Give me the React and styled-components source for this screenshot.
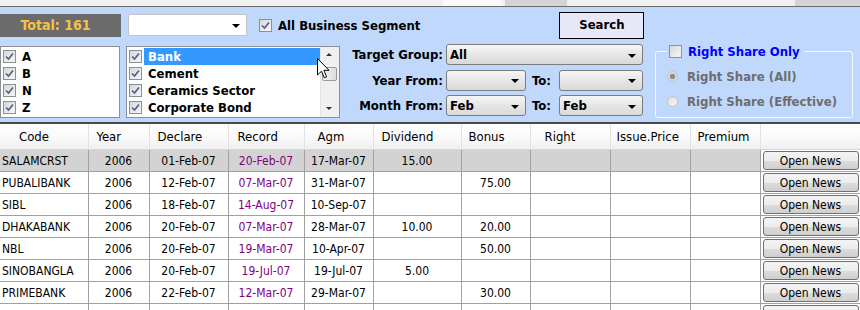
import React from 'react';
import styled, { createGlobalStyle } from 'styled-components';

const GlobalStyle = createGlobalStyle`
  html, body {
    margin: 0;
    padding: 0;
    background: #ffffff;
    overflow: hidden;
  }
  body {
    font-family: "DejaVu Sans", "Liberation Sans", sans-serif;
    font-stretch: condensed;
  }
`;

const columns = [
  { key: 'code', label: 'Code', w: 88, pad: 19, align: 'left' },
  { key: 'year', label: 'Year', w: 61, pad: 8 },
  { key: 'declare', label: 'Declare', w: 79, pad: 8 },
  { key: 'record', label: 'Record', w: 76, pad: 9, purple: true },
  { key: 'agm', label: 'Agm', w: 69, pad: 13 },
  { key: 'dividend', label: 'Dividend', w: 88, pad: 8 },
  { key: 'bonus', label: 'Bonus', w: 69, pad: 7 },
  { key: 'right', label: 'Right', w: 80, pad: 14 },
  { key: 'issue', label: 'Issue.Price', w: 80, pad: 6 },
  { key: 'premium', label: 'Premium', w: 70, pad: 7 },
  { key: 'news', label: '', w: 100, pad: 0 },
];

const rows = [
  { code: 'SALAMCRST', year: '2006', declare: '01-Feb-07', record: '20-Feb-07', agm: '17-Mar-07', dividend: '15.00', bonus: '' },
  { code: 'PUBALIBANK', year: '2006', declare: '12-Feb-07', record: '07-Mar-07', agm: '31-Mar-07', dividend: '', bonus: '75.00' },
  { code: 'SIBL', year: '2006', declare: '18-Feb-07', record: '14-Aug-07', agm: '10-Sep-07', dividend: '', bonus: '' },
  { code: 'DHAKABANK', year: '2006', declare: '20-Feb-07', record: '07-Mar-07', agm: '28-Mar-07', dividend: '10.00', bonus: '20.00' },
  { code: 'NBL', year: '2006', declare: '20-Feb-07', record: '19-Mar-07', agm: '10-Apr-07', dividend: '', bonus: '50.00' },
  { code: 'SINOBANGLA', year: '2006', declare: '20-Feb-07', record: '19-Jul-07', agm: '19-Jul-07', dividend: '5.00', bonus: '' },
  { code: 'PRIMEBANK', year: '2006', declare: '22-Feb-07', record: '12-Mar-07', agm: '29-Mar-07', dividend: '', bonus: '30.00' },
  // next row only peeks in at the bottom edge
  { code: '', year: '', declare: '', record: '', agm: '', dividend: '', bonus: '', partial: true },
];

const Page = styled.div`
  position: relative;
  width: 860px;
  height: 310px;
  overflow: hidden;
`;

const TopStrip = styled.div`
  height: 6px;
  background: #f1f1f1;
  border-bottom: 1px solid #6c6c6c;
  display: flex;
`;

const StripPiece = styled.div`
  margin-left: ${(p) => p.$gap}px;
  width: ${(p) => p.$w}px;
  height: 6px;
  background: ${(p) => p.$bg};
`;

const Panel = styled.div`
  height: 117px;
  background: #bfd8fb;
  border-bottom: 2px solid #4a4a4a;
  padding-top: 5px;
  box-sizing: border-box;
  font-weight: bold;
  font-size: 13px;
  color: #000;
`;

const TopRow = styled.div`
  display: flex;
  align-items: center;
  height: 26px;
`;

const TotalBox = styled.div`
  width: 121px;
  height: 23px;
  background: #6b6b6b;
  color: #f6c244;
  display: flex;
  align-items: center;
  justify-content: center;
  padding-right: 10px;
  box-sizing: border-box;
  font-size: 14px;
`;

const Combo = styled.div`
  position: relative;
  width: ${(p) => p.$w}px;
  height: ${(p) => p.$h || 21}px;
  box-sizing: border-box;
  border: 1px solid ${(p) => (p.$plain ? '#c4c4c4' : '#7c7c7c')};
  border-radius: ${(p) => (p.$plain ? 2 : 3)}px;
  background: ${(p) => (p.$plain ? '#ffffff' : 'linear-gradient(#f6f6f6, #e6e6e6 50%, #d9d9d9)')};
  display: flex;
  align-items: center;
  padding-left: 3px;
  font-weight: bold;
  font-size: 13px;
  margin-left: ${(p) => p.$ml || 0}px;
`;

const Arrow = styled.span`
  position: absolute;
  right: 6px;
  top: 50%;
  margin-top: -1px;
  width: 0;
  height: 0;
  border-left: 4px solid transparent;
  border-right: 4px solid transparent;
  border-top: 4px solid #000;
`;

const CheckLabel = styled.label`
  display: flex;
  align-items: center;
  gap: 6px;
  margin-left: ${(p) => p.$ml || 0}px;
  color: ${(p) => p.$color || '#000'};
  white-space: nowrap;
`;

const Box = styled.span`
  width: 13px;
  height: 13px;
  box-sizing: border-box;
  border: 1px solid #8f9090;
  background: linear-gradient(135deg, #d8d8d8, #f6f6f6);
  display: inline-flex;
  align-items: center;
  justify-content: center;
  flex: none;
`;

const SearchButton = styled.button`
  margin-left: 139px;
  width: 85px;
  height: 27px;
  border: 1px solid #000;
  background: #e7e7f8;
  font: inherit;
  font-weight: bold;
  font-size: 13px;
  color: #000;
  padding: 0 0 1px;
`;

const BottomArea = styled.div`
  display: flex;
  align-items: flex-start;
  margin-top: 6px;
`;

const ListBox = styled.div`
  position: relative;
  width: ${(p) => p.$w}px;
  height: 72px;
  margin-top: 2px;
  margin-left: ${(p) => p.$ml || 0}px;
  box-sizing: border-box;
  border: 1px solid #8a8f98;
  background: #fff;
  padding-top: 1px;
`;

const ListItem = styled.div`
  height: 17px;
  display: flex;
  align-items: center;
  padding-left: 2px;
`;

const ItemText = styled.span`
  height: 17px;
  display: flex;
  align-items: center;
  margin-left: 2px;
  padding-left: 4px;
  width: ${(p) => (p.$sel ? '177px' : 'auto')};
  background: ${(p) => (p.$sel ? '#3399ff' : 'transparent')};
  color: ${(p) => (p.$sel ? '#fff' : '#000')};
`;

const ScrollBar = styled.div`
  position: absolute;
  right: 0;
  top: 0;
  bottom: 0;
  width: 18px;
  background: #f0f0f0;
  border-left: 1px solid #e4e4e4;
`;

const ScrollArrow = styled.span`
  position: absolute;
  left: 5px;
  ${(p) => (p.$up ? 'top: 6px;' : 'bottom: 7px;')}
  width: 0;
  height: 0;
  border-left: 3px solid transparent;
  border-right: 3px solid transparent;
  ${(p) => (p.$up ? 'border-bottom: 3px solid #333;' : 'border-top: 3px solid #333;')}
`;

const Thumb = styled.span`
  position: absolute;
  left: 1px;
  top: 20px;
  width: 15px;
  height: 14px;
  box-sizing: border-box;
  border: 1px solid #9a9a9a;
  border-radius: 2px;
  background: linear-gradient(90deg, #f4f4f4, #dcdcdc);
`;

const FormGrid = styled.div`
  display: grid;
  grid-template-columns: 102px 80px 33px 84px;
  grid-auto-rows: 21px;
  row-gap: 4.5px;
  margin-left: 4px;
`;

const FormLabel = styled.div`
  display: flex;
  align-items: center;
  justify-content: ${(p) => (p.$left ? 'flex-start' : 'flex-end')};
  padding-right: ${(p) => (p.$left ? 0 : 3)}px;
  padding-left: ${(p) => (p.$left ? 6 : 0)}px;
  white-space: nowrap;
`;

const GroupBox = styled.fieldset`
  margin: 0 0 0 12px;
  width: 198px;
  height: 74px;
  box-sizing: border-box;
  border: 1px solid #f6f8ff;
  border-radius: 3px;
  padding: 6px 0 0 11px;
`;

const Legend = styled.legend`
  padding: 0 4px 0 2px;
  height: 14px;
  display: flex;
  align-items: center;
`;

const RadioRow = styled.div`
  display: flex;
  align-items: center;
  gap: 9px;
  height: 25px;
  color: #6d6d6d;
  white-space: nowrap;
`;

const Radio = styled.span`
  width: 11px;
  height: 11px;
  box-sizing: border-box;
  border-radius: 50%;
  border: 1px solid #c4c4c4;
  background: ${(p) =>
    p.$on
      ? 'radial-gradient(circle, #8c8c8c 0 2.5px, #d8d8d8 3px)'
      : 'linear-gradient(135deg, #dedede, #f8f8f8)'};
  flex: none;
`;

const Table = styled.table`
  border-collapse: collapse;
  table-layout: fixed;
  width: 860px;
  font-size: 12px;
`;

const HeadCell = styled.th`
  height: 25px;
  padding: 0 0 0 ${(p) => p.$pad}px;
  text-align: left;
  font-weight: normal;
  font-size: 13px;
  background: linear-gradient(#ffffff, #f8f8f8 60%, #efefef);
  border-right: 1px solid #e2e2e2;
  border-bottom: 1px solid #d6d6d6;
  white-space: nowrap;
  overflow: hidden;
`;

const Cell = styled.td`
  height: 21px;
  padding: 0 0 0 ${(p) => (p.$left ? 2 : 0)}px;
  text-align: ${(p) => (p.$left ? 'left' : 'center')};
  color: ${(p) => (p.$purple ? '#800080' : '#000')};
  background: ${(p) => (p.$sel ? '#d3d3d3' : '#fff')};
  border-right: 1px solid #a0a0a0;
  border-bottom: 1px solid #a0a0a0;
  white-space: nowrap;
  overflow: hidden;
`;

const NewsCell = styled.td`
  height: 21px;
  padding: 0 0 0 2px;
  border-bottom: 1px solid #a0a0a0;
  background: #fff;
`;

const NewsButton = styled.button`
  width: 96px;
  height: 19px;
  display: block;
  border: 1px solid #707070;
  border-radius: 3px;
  background: linear-gradient(#f4f4f4, #ececec 50%, #dcdcdc 51%, #cfcfcf);
  font: inherit;
  font-size: 12px;
  color: #000;
  padding: 0;
`;

const Cursor = styled.svg`
  position: absolute;
  left: 317px;
  top: 58px;
`;

const Check = () => (
  <svg width="9" height="9" viewBox="0 0 9 9">
    <path d="M1 4.5 L3.5 7 L8 1.5" fill="none" stroke="#4c5f86" strokeWidth="1.6" />
  </svg>
);

const CheckBox = ({ checked }) => <Box>{checked && <Check />}</Box>;

export default function App() {
  return (
    <Page>
      <GlobalStyle />
      <TopStrip>
        <StripPiece $gap={443} $w={59} $bg="#fdf9f9" />
        <StripPiece $gap={3} $w={62} $bg="#d4d4d4" />
        <StripPiece $gap={228} $w={65} $bg="#d4d4d4" />
      </TopStrip>
      <Panel>
        <TopRow>
          <TotalBox>Total: 161</TotalBox>
          <Combo $plain $w={119} $ml={7} $h={22}>
            <Arrow />
          </Combo>
          <CheckLabel $ml={12}>
            <CheckBox checked />
            All Business Segment
          </CheckLabel>
          <SearchButton>Search</SearchButton>
        </TopRow>
        <BottomArea>
          <ListBox $w={120}>
            {['A', 'B', 'N', 'Z'].map((t) => (
              <ListItem key={t}>
                <CheckBox checked />
                <ItemText>{t}</ItemText>
              </ListItem>
            ))}
          </ListBox>
          <ListBox $w={214} $ml={6}>
            {['Bank', 'Cement', 'Ceramics Sector', 'Corporate Bond'].map((t, i) => (
              <ListItem key={t}>
                <CheckBox checked />
                <ItemText $sel={i === 0}>{t}</ItemText>
              </ListItem>
            ))}
            <ScrollBar>
              <ScrollArrow $up />
              <Thumb />
              <ScrollArrow />
            </ScrollBar>
          </ListBox>
          <FormGrid>
            <FormLabel>Target Group:</FormLabel>
            <Combo $w={197} style={{ gridColumn: 'span 3' }}>
              All
              <Arrow />
            </Combo>
            <FormLabel>Year From:</FormLabel>
            <Combo $w={80}>
              <Arrow />
            </Combo>
            <FormLabel $left>To:</FormLabel>
            <Combo $w={84}>
              <Arrow />
            </Combo>
            <FormLabel>Month From:</FormLabel>
            <Combo $w={80}>
              Feb
              <Arrow />
            </Combo>
            <FormLabel $left>To:</FormLabel>
            <Combo $w={84}>
              Feb
              <Arrow />
            </Combo>
          </FormGrid>
          <GroupBox>
            <Legend>
              <CheckLabel $color="#0000ff">
                <CheckBox />
                Right Share Only
              </CheckLabel>
            </Legend>
            <RadioRow>
              <Radio $on />
              Right Share (All)
            </RadioRow>
            <RadioRow>
              <Radio />
              Right Share (Effective)
            </RadioRow>
          </GroupBox>
        </BottomArea>
      </Panel>
      <Table>
        <colgroup>
          {columns.map((c) => (
            <col key={c.key} style={{ width: c.w }} />
          ))}
        </colgroup>
        <thead>
          <tr>
            {columns.map((c) => (
              <HeadCell key={c.key} $pad={c.pad}>
                {c.label}
              </HeadCell>
            ))}
          </tr>
        </thead>
        <tbody>
          {rows.map((r, i) => (
            <tr key={i}>
              {columns.slice(0, 10).map((c) => (
                <Cell key={c.key} $left={c.align === 'left'} $purple={c.purple} $sel={i === 0}>
                  {r[c.key] || ''}
                </Cell>
              ))}
              <NewsCell>
                <NewsButton aria-label="Open News">{r.partial ? '' : 'Open News'}</NewsButton>
              </NewsCell>
            </tr>
          ))}
        </tbody>
      </Table>
      <Cursor width="13" height="22" viewBox="0 0 13 22">
        <path d="M0.5 0.5 L0.5 17 L4.5 13.2 L7.3 19.8 L9.6 18.8 L6.9 12.3 L12 12.3 Z" fill="#fff" stroke="#000" strokeWidth="1" />
      </Cursor>
    </Page>
  );
}
